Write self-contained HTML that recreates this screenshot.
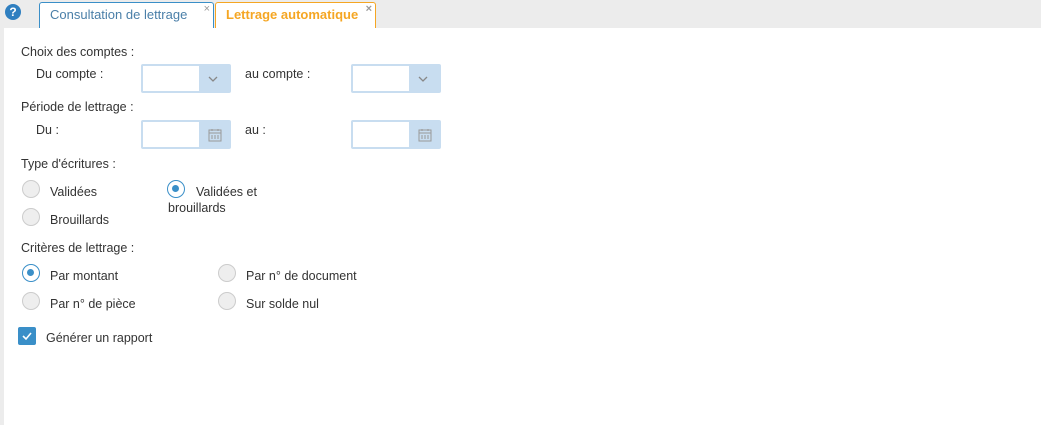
<!DOCTYPE html><html><head><style>
*{box-sizing:border-box}
body{margin:0;width:1041px;height:425px;background:#ececec;font-family:"Liberation Sans",sans-serif;font-size:12.5px;color:#333;position:relative;overflow:hidden}
.a{position:absolute}
.main{position:absolute;left:4px;top:28px;right:0;bottom:0;background:#fff}
.tab{position:absolute;top:2px;height:26px;border:1px solid;border-bottom:none;border-radius:3px 3px 0 0;background:#fff;padding:4px 0 0 10px;font-size:13px}
.x{position:absolute;right:3px;top:0;font-size:11px;color:#999}
.combo{position:absolute;width:90px;height:29px;background:#c8ddf0;border-radius:2px}
.combo .in{position:absolute;left:2px;top:2px;width:56px;height:25px;background:#fff}
.r{position:absolute;width:18px;height:18px;border-radius:50%;border:1px solid #ccc;background:#eee}
.r.on{border:1.5px solid #3a8fc8;background:#fff}
.r.on:after{content:"";position:absolute;left:4px;top:4px;width:7px;height:7px;border-radius:50%;background:#3a8fc8}
.t{position:absolute;white-space:nowrap}
</style></head><body>
<div class="a" style="left:5px;top:4px;width:16px;height:16px;border-radius:50%;background:#2f7fc0;color:#fff;font-weight:bold;font-size:12px;text-align:center;line-height:16px">?</div>
<div class="tab" style="left:39px;width:175px;border-color:#3a8fc8;color:#4a7fa8">Consultation de lettrage<span class="x">×</span></div>
<div class="tab" style="left:215px;width:161px;border-color:#f5a623;color:#f5a623;font-weight:bold">Lettrage automatique<span class="x">×</span></div>
<div class="main"></div>
<div class="t" style="left:21px;top:45px">Choix des comptes :</div>
<div class="t" style="left:36px;top:67px">Du compte :</div>
<div class="t" style="left:245px;top:67px">au compte :</div>
<div class="combo" style="left:141px;top:64px"><div class="in"></div><svg class="a" style="left:66px;top:10px" width="12" height="10"><path d="M2 3l4 4 4-4" stroke="#888" fill="none" stroke-width="1.3"/></svg></div>
<div class="combo" style="left:351px;top:64px"><div class="in"></div><svg class="a" style="left:66px;top:10px" width="12" height="10"><path d="M2 3l4 4 4-4" stroke="#888" fill="none" stroke-width="1.3"/></svg></div>
<div class="t" style="left:21px;top:100px">Période de lettrage :</div>
<div class="t" style="left:36px;top:123px">Du :</div>
<div class="t" style="left:245px;top:123px">au :</div>
<div class="combo" style="left:141px;top:120px"><div class="in"></div><svg class="a" style="left:67px;top:8px" width="14" height="14"><rect x="1" y="2" width="12" height="11" fill="none" stroke="#999"/><path d="M1 5h12M4 1v2M10 1v2M4 7v4M7 7v4M10 7v4" stroke="#999"/></svg></div>
<div class="combo" style="left:351px;top:120px"><div class="in"></div><svg class="a" style="left:67px;top:8px" width="14" height="14"><rect x="1" y="2" width="12" height="11" fill="none" stroke="#999"/><path d="M1 5h12M4 1v2M10 1v2M4 7v4M7 7v4M10 7v4" stroke="#999"/></svg></div>
<div class="t" style="left:21px;top:157px">Type d'écritures :</div>
<div class="r" style="left:22px;top:180px"></div><div class="t" style="left:50px;top:185px">Validées</div>
<div class="r" style="left:22px;top:208px"></div><div class="t" style="left:50px;top:213px">Brouillards</div>
<div class="r on" style="left:167px;top:180px"></div><div class="t" style="left:196px;top:185px">Validées et</div><div class="t" style="left:168px;top:201px">brouillards</div>
<div class="t" style="left:21px;top:241px">Critères de lettrage :</div>
<div class="r on" style="left:22px;top:264px"></div><div class="t" style="left:50px;top:269px">Par montant</div>
<div class="r" style="left:22px;top:292px"></div><div class="t" style="left:50px;top:297px">Par n° de pièce</div>
<div class="r" style="left:218px;top:264px"></div><div class="t" style="left:246px;top:269px">Par n° de document</div>
<div class="r" style="left:218px;top:292px"></div><div class="t" style="left:246px;top:297px">Sur solde nul</div>
<div class="a" style="left:18px;top:327px;width:18px;height:18px;background:#3a8fc8;border-radius:2px"><svg width="18" height="18"><path d="M5 9l3 3 5-6" stroke="#fff" fill="none" stroke-width="1.6"/></svg></div>
<div class="t" style="left:46px;top:331px">Générer un rapport</div>
</body></html>
